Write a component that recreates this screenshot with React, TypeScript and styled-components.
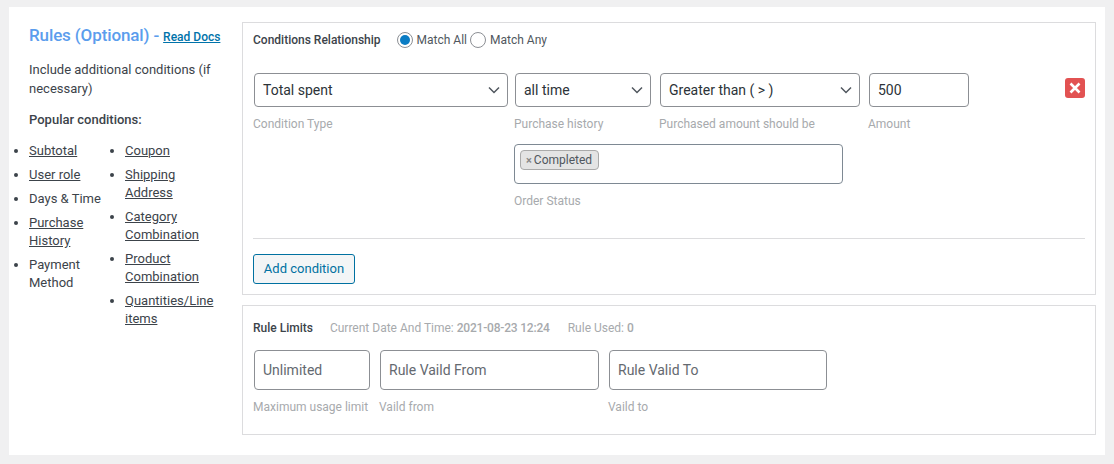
import React from "react";
import styled, { createGlobalStyle } from "styled-components";

const Global = createGlobalStyle`
  html, body { margin: 0; padding: 0; background: #f0f0f1; }
  body { font-family: Roboto, "Liberation Sans", sans-serif; font-size: 13px; color: #3c434a; }
`;
const Page = styled.div`
  width: 1096px; height: 448px; margin: 7px 9px 0; background: #fff; box-sizing: border-box;
  padding: 15px 9px 0 0; display: flex;
`;
const Side = styled.aside`width: 233px; flex: none; box-sizing: border-box; padding-left: 20px;`;
const Heading = styled.div`
  display: flex; align-items: baseline; height: 27px; margin-bottom: 11px; white-space: nowrap;
`;
const Title = styled.span`font-size: 17px; font-weight: 500; letter-spacing: -0.12px; color: #5b9ded; line-height: 27px;`;
const Docs = styled.a`
  font-size: 12px; font-weight: 500; color: #0073aa; text-decoration: underline; margin-left: 4px;
`;
const Intro = styled.p`margin: 0 0 12px; line-height: 19px; width: 195px;`;
const Popular = styled.div`font-weight: 500; line-height: 20px; margin: 0 0 12px;`;
const Lists = styled.div`display: flex; margin-left: 0;`;
const List = styled.ul<{ $w: number }>`
  list-style: disc; margin: 0; padding: 0; width: ${p => p.$w}px; flex: none;
`;
const Item = styled.li`line-height: 18px; margin-bottom: 6px;`;
const Lnk = styled.a`color: #3c434a; text-decoration: underline;`;

const Main = styled.main`flex: 1; min-width: 0; display: flex; flex-direction: column; gap: 10px;`;
const Panel = styled.section<{ $h: number }>`
  height: ${p => p.$h}px; box-sizing: border-box; border: 1px solid #dcdcde; padding: 0 10px;
`;
const TopRow = styled.div`display: flex; align-items: center; height: 34px;`;
const Strong = styled.span`font-size: 12px; font-weight: 500; color: #3c434a; white-space: nowrap;`;
const Radios = styled.div`display: flex; align-items: center; margin-left: 16px; font-size: 12px; color: #50575e;`;
const Radio = styled.span<{ $on?: boolean }>`
  width: 16px; height: 16px; box-sizing: border-box; border-radius: 50%; border: 1px solid #8c8f94;
  margin-right: 4px; display: flex; align-items: center; justify-content: center; background: #fff;
  &::after { content: ""; width: 10px; height: 10px; border-radius: 50%; background: ${p => (p.$on ? "#0a7cc4" : "transparent")}; }
`;
const RadioText = styled.span`margin-right: 3px;`;

const Conditions = styled.div`
  display: grid; grid-template-columns: 261px 145px 209px 102px 1fr; margin-top: 16px; position: relative;
`;
const Col = styled.div<{ $span?: number; $start?: number }>`
  ${p => (p.$start ? `grid-column: ${p.$start} / span ${p.$span ?? 1};` : "")}
`;
const Box = styled.div<{ $w: number; $h?: number; $muted?: boolean }>`
  width: ${p => p.$w}px; height: ${p => p.$h ?? 34}px; margin: 0 1px; box-sizing: border-box; border: 1px solid #8c8f94;
  border-radius: 4px; background: #fff; padding: 0 8px; display: flex; align-items: center; justify-content: space-between;
  font-size: 14px; color: ${p => (p.$muted ? "#646970" : "#2c3338")}; white-space: nowrap;
`;
const Hint = styled.div<{ $mb?: number }>`
  font-size: 12px; color: #a7aaad; line-height: 14px; margin-top: 10px; margin-bottom: ${p => p.$mb ?? 13}px; white-space: nowrap;
`;
const Chevron = () => (
  <svg width="12" height="8" viewBox="0 0 12 8" fill="none" stroke="#50575e" strokeWidth="1.5" style={{ marginRight: -1 }}>
    <path d="M1 1.5 6 6.5 11 1.5" />
  </svg>
);
const Tokens = styled(Box)`align-items: flex-start; justify-content: flex-start; padding: 5px; margin: 0; border-color: #7e8993;`;
const Token = styled.span`
  height: 20px; box-sizing: border-box; border: 1px solid #aaa; border-radius: 4px; background: #e4e4e4; padding: 0 6px 0 5px;
  display: flex; align-items: center; font-size: 12px; color: #50575e;
`;
const TokenX = styled.span`color: #888; font-weight: 700; margin-right: 2px; font-size: 11px;`;
const Remove = styled.button`
  position: absolute; right: 0; top: 5px; width: 20px; height: 20px; padding: 0; border: 0; border-radius: 3px;
  background: #e25252; display: flex; align-items: center; justify-content: center;
`;
const Divider = styled.hr`border: 0; border-top: 1px solid #dcdcde; margin: 0 0 15px;`;
const AddBtn = styled.button`
  width: 102px; height: 30px; box-sizing: border-box; border: 1px solid #0071a1; border-radius: 3px; background: #f3f5f6;
  color: #0071a1; font: 400 13px Roboto, sans-serif; padding: 0 0 2px;
`;
const LimitHead = styled.div`display: flex; align-items: center; height: 44px; font-size: 12px; color: #a7aaad; white-space: nowrap;`;
const Meta = styled.span<{ $ml: number }>`margin-left: ${p => p.$ml}px; b { font-weight: 500; letter-spacing: -0.2px; }`;
const Limits = styled.div`display: flex;`;
const LimitCol = styled.div<{ $w: number }>`width: ${p => p.$w}px; flex: none;`;

export default function App() {
  return (
    <>
      <Global />
      <Page>
        <Side>
          <Heading>
            <Title>Rules (Optional) -</Title>
            <Docs href="#">Read Docs</Docs>
          </Heading>
          <Intro>Include additional conditions (if necessary)</Intro>
          <Popular>Popular conditions:</Popular>
          <Lists>
            <List $w={96}>
              <Item><Lnk href="#">Subtotal</Lnk></Item>
              <Item><Lnk href="#">User role</Lnk></Item>
              <Item>Days &amp; Time</Item>
              <Item><Lnk href="#">Purchase History</Lnk></Item>
              <Item>Payment Method</Item>
            </List>
            <List $w={96}>
              <Item><Lnk href="#">Coupon</Lnk></Item>
              <Item><Lnk href="#">Shipping Address</Lnk></Item>
              <Item><Lnk href="#">Category Combination</Lnk></Item>
              <Item><Lnk href="#">Product Combination</Lnk></Item>
              <Item><Lnk href="#">Quantities/Line items</Lnk></Item>
            </List>
          </Lists>
        </Side>
        <Main>
          <Panel $h={273}>
            <TopRow>
              <Strong>Conditions Relationship</Strong>
              <Radios>
                <Radio $on /><RadioText>Match All</RadioText>
                <Radio /><RadioText>Match Any</RadioText>
              </Radios>
            </TopRow>
            <Conditions>
              <Col>
                <Box $w={254}>Total spent<Chevron /></Box>
                <Hint>Condition Type</Hint>
              </Col>
              <Col>
                <Box $w={136}>all time<Chevron /></Box>
                <Hint>Purchase history</Hint>
              </Col>
              <Col>
                <Box $w={200}>Greater than ( &gt; )<Chevron /></Box>
                <Hint>Purchased amount should be</Hint>
              </Col>
              <Col>
                <Box $w={100}>500</Box>
                <Hint>Amount</Hint>
              </Col>
              <Col $start={2} $span={3}>
                <Tokens $w={329} $h={40}>
                  <Token><TokenX>×</TokenX>Completed</Token>
                </Tokens>
                <Hint $mb={30}>Order Status</Hint>
              </Col>
              <Remove aria-label="Remove">
                <svg width="12" height="12" viewBox="0 0 12 12" fill="none" stroke="#fff" strokeWidth="2.6">
                  <path d="M1.5 1.5 10.5 10.5M10.5 1.5 1.5 10.5" />
                </svg>
              </Remove>
            </Conditions>
            <Divider />
            <AddBtn>Add condition</AddBtn>
          </Panel>
          <Panel $h={130}>
            <LimitHead>
              <Strong>Rule Limits</Strong>
              <Meta $ml={17}>Current Date And Time: <b>2021-08-23 12:24</b></Meta>
              <Meta $ml={18}>Rule Used: <b>0</b></Meta>
            </LimitHead>
            <Limits>
              <LimitCol $w={126}>
                <Box $w={116} $h={40} $muted>Unlimited</Box>
                <Hint>Maximum usage limit</Hint>
              </LimitCol>
              <LimitCol $w={229}>
                <Box $w={219} $h={40} $muted>Rule Vaild From</Box>
                <Hint>Vaild from</Hint>
              </LimitCol>
              <LimitCol $w={220}>
                <Box $w={218} $h={40} $muted>Rule Valid To</Box>
                <Hint>Vaild to</Hint>
              </LimitCol>
            </Limits>
          </Panel>
        </Main>
      </Page>
    </>
  );
}
